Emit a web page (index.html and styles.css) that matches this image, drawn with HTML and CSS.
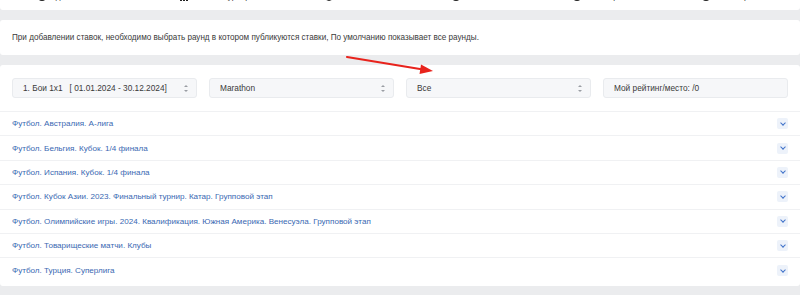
FILE: index.html
```html
<!DOCTYPE html>
<html lang="ru">
<head>
<meta charset="utf-8">
<title>Ставки</title>
<link rel="stylesheet" href="styles.css">
</head>
<body>
<div class="page">
  <div class="card nav">
    <div class="nav-row">
      <div class="nav-item"><span class="dot"></span>Сделать ставки</div>
      <div class="nav-item"><span class="bars"></span>Рейтинг турнира</div>
      <div class="nav-item"><span class="ring"></span>Мои ставки</div>
      <div class="nav-item"><span class="dot"></span>Все ставки</div>
      <div class="nav-item"><span class="dot"></span>Все встречи</div>
      <div class="nav-item"><span class="dot"></span>Мои встречи</div>
    </div>
  </div>

  <div class="card info">При добавлении ставок, необходимо выбрать раунд в котором публикуются ставки, По умолчанию показывает все раунды.</div>

  <div class="card main">
    <div class="filters">
      <div class="select">1. Бои 1x1&nbsp;&nbsp; [ 01.01.2024 - 30.12.2024]<span class="updown"></span></div>
      <div class="select">Marathon<span class="updown"></span></div>
      <div class="select">Все<span class="updown"></span></div>
      <div class="select field">Мой рейтинг/место: /0</div>
    </div>
    <ul class="list">
      <li class="row"><a class="link">Футбол. Австралия. А-лига</a><span class="chev"></span></li>
      <li class="row"><a class="link">Футбол. Бельгия. Кубок. 1/4 финала</a><span class="chev"></span></li>
      <li class="row"><a class="link">Футбол. Испания. Кубок. 1/4 финала</a><span class="chev"></span></li>
      <li class="row"><a class="link">Футбол. Кубок Азии. 2023. Финальный турнир. Катар. Групповой этап</a><span class="chev"></span></li>
      <li class="row"><a class="link">Футбол. Олимпийские игры. 2024. Квалификация. Южная Америка. Венесуэла. Групповой этап</a><span class="chev"></span></li>
      <li class="row"><a class="link">Футбол. Товарищеские матчи. Клубы</a><span class="chev"></span></li>
      <li class="row"><a class="link">Футбол. Турция. Суперлига</a><span class="chev"></span></li>
    </ul>
  </div>

  <svg class="arrow" width="100" height="30" viewBox="0 0 100 30">
    <line x1="2" y1="2" x2="78" y2="14.5" stroke="#e8231c" stroke-width="2.2" stroke-linecap="round"/>
    <polygon points="88,16 76,9.5 74.5,19" fill="#e8231c"/>
  </svg>
</div>
</body>
</html>
```

FILE: styles.css
```css
* { box-sizing: border-box; }
html, body { margin: 0; padding: 0; }
body {
  background: #ebecee;
  font-family: "Liberation Sans", Arial, sans-serif;
  font-size: 8.1px;
  color: #3a3a3a;
  width: 800px;
  height: 295px;
  overflow: hidden;
}
.page { position: relative; }
.card {
  background: #fff;
  border-radius: 3px;
}
.nav {
  height: 10px;
  overflow: hidden;
  border-radius: 0 0 3px 3px;
}
.nav-row {
  display: grid;
  grid-template-columns: 142px 145px 127px 121px 129px auto;
  padding-left: 38px;
  margin-top: -8px;
  line-height: 10px;
  color: #333;
  font-size: 8.1px;
}
.nav-item { display: flex; align-items: center; gap: 4px; }
.dot, .ring, .bars {
  display: inline-block;
  width: 8px; height: 8px;
  border-radius: 50%;
  background: #222;
  flex: none;
}
.ring { background: #fff; border: 1.5px solid #222; }
.bars { border-radius: 0; background: linear-gradient(90deg, #222 0 2px, transparent 2px 3px, #222 3px 5px, transparent 5px 6px, #222 6px 8px); }

.info {
  margin-top: 10px;
  height: 35px;
  padding: 0 12px;
  display: flex;
  align-items: center;
  font-size: 8.15px;
}

.main {
  margin-top: 10px;
  padding-top: 13px;
  padding-bottom: 3px;
}
.filters {
  display: grid;
  grid-template-columns: repeat(4, 1fr);
  gap: 12px;
  padding: 0 12px 13px;
  border-bottom: 1px solid #f0f1f3;
}
.select {
  position: relative;
  height: 20px;
  background: #f6f7f9;
  border: 1px solid #e9ebee;
  border-radius: 3px;
  padding: 0 10px;
  display: flex;
  align-items: center;
  font-size: 8.3px;
}
.updown {
  position: absolute;
  right: 7px;
  top: 6px;
  width: 5px;
  height: 7px;
}
.updown::before, .updown::after {
  content: "";
  position: absolute;
  left: 0;
  border-left: 2.5px solid transparent;
  border-right: 2.5px solid transparent;
}
.updown::before { top: 0; border-bottom: 2.5px solid #9a9ea4; }
.updown::after { bottom: 0; border-top: 2.5px solid #9a9ea4; }

.list { list-style: none; margin: 0; padding: 0; }
.row {
  height: 24.4px;
  display: flex;
  align-items: center;
  justify-content: space-between;
  padding: 0 12px;
  border-bottom: 1px solid #f0f1f3;
}
.row:last-child { border-bottom: 0; }
.link { color: #3a68b2; text-decoration: none; font-size: 8.1px; }
.chev {
  width: 11px; height: 11px;
  background: #edf2fa;
  border-radius: 2px;
  position: relative;
}
.chev::after {
  content: "";
  position: absolute;
  left: 3.5px; top: 2.5px;
  width: 3px; height: 3px;
  border-right: 1.5px solid #3f72c9;
  border-bottom: 1.5px solid #3f72c9;
  transform: rotate(45deg);
}
.arrow {
  position: absolute;
  left: 345px;
  top: 55px;
}
```
